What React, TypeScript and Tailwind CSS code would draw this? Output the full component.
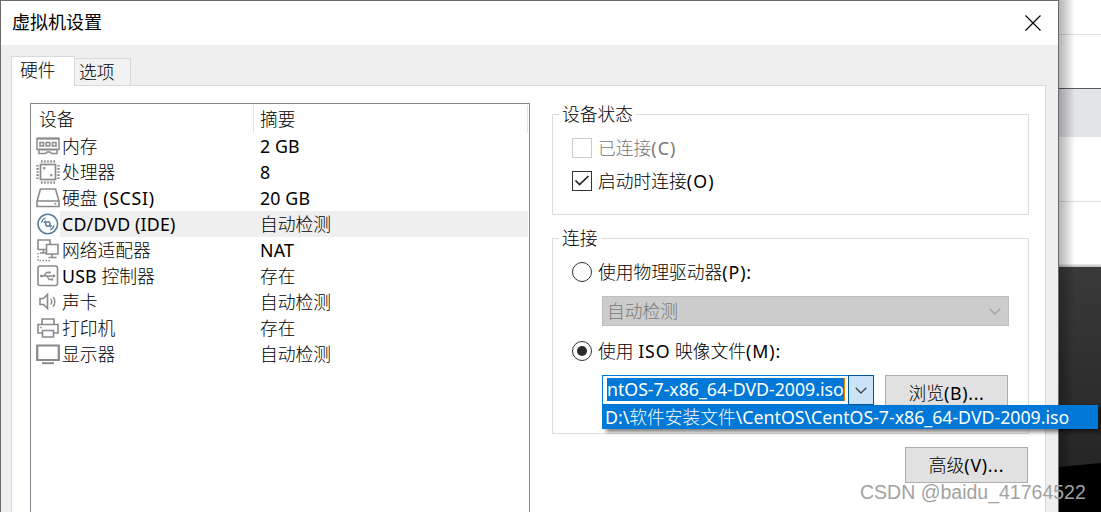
import React, { useState } from "react";
import clsx from "clsx";

type IconName =
  | "memory"
  | "cpu"
  | "disk"
  | "disc"
  | "network"
  | "usb"
  | "sound"
  | "printer"
  | "display";

const devices: { icon: IconName; name: string; summary: string; latin?: string }[] = [
  { icon: "memory", name: "内存", summary: "2 GB" },
  { icon: "cpu", name: "处理器", summary: "8" },
  { icon: "disk", name: "硬盘 (SCSI)", summary: "20 GB", latin: "ml-px tracking-[0.7px]" },
  { icon: "disc", name: "CD/DVD (IDE)", summary: "自动检测" },
  { icon: "network", name: "网络适配器", summary: "NAT" },
  { icon: "usb", name: "USB 控制器", summary: "存在" },
  { icon: "sound", name: "声卡", summary: "自动检测" },
  { icon: "printer", name: "打印机", summary: "存在" },
  { icon: "display", name: "显示器", summary: "自动检测" },
];

const iconShapes: Record<IconName, React.ReactNode> = {
  memory: (
    <>
      <path d="M1 4.500h22v11h-2v4h-5.500l-1.500-1.500h-3l-1.500 1.500H3v-4H1z" strokeWidth="1.5" />
      <path d="M4 8.500h3.500V12H4zM10.200 8.500h3.500V12h-3.500zM16.500 8.500H20V12h-3.500z" strokeWidth="1.6" />
      <path d="M1 4.500h22M3 15.500h18" strokeWidth="2" />
    </>
  ),
  cpu: (
    <>
      <rect x="4.500" y="4.500" width="15" height="15" strokeWidth="1.7" />
      <path d="M5 1.500h14M5 22.500h14" strokeWidth="2.4" strokeDasharray="1.6 1.5" />
      <path d="M1.500 5v14M22.500 5v14" strokeWidth="2.4" strokeDasharray="1.6 1.5" />
      <path d="M7.500 7.500H9V9H7.500zM14.500 14.500H16V16h-1.500z" strokeWidth="1" />
    </>
  ),
  disk: (
    <>
      <path d="M4.500 3h15L23 15v5.500H1V15zM1 15h22" strokeWidth="1.6" />
      <path d="M18.500 17.700h1.800" strokeWidth="1.6" />
    </>
  ),
  disc: (
    <g stroke="#5b7d9c">
      <circle cx="11.800" cy="12" r="9.800" strokeWidth="1.6" />
      <circle cx="11.800" cy="12" r="2.200" strokeWidth="1.5" />
      <path
        d="M5.500 10.500a6.500 6.500 0 0 1 4-4.500M8 11a4 4 0 0 1 1.800-2.400M18.100 13.500a6.500 6.500 0 0 1-4 4.500M15.600 13a4 4 0 0 1-1.800 2.400"
        strokeWidth="1.3"
      />
    </g>
  ),
  network: (
    <>
      <path d="M10.500 11.500H2V2h12v4" strokeWidth="1.6" />
      <path d="M10.500 6.500H22V16H10.500zM16 16v3M12.500 19.500h8" strokeWidth="1.6" />
      <path d="M7.500 11.500v3M4 15h6.500" strokeWidth="1.6" />
      <path d="M2 15v7.500h12" strokeWidth="1.4" strokeDasharray="1.5 1.5" />
    </>
  ),
  usb: (
    <>
      <rect x="2" y="2" width="19.500" height="19.500" rx="2" strokeWidth="1.6" />
      <path d="M5.500 12h12M8 12l2.500-3.500h2.500M11 12l2 3.500h2.500" strokeWidth="1.3" />
      <path
        d="M17 10l2.800 2-2.800 2zM4.200 10.800h2.400v2.400H4.200zM12.800 7.500h2v2h-2zM15 14.500h2v2h-2z"
        fill="#8a8a8a"
        stroke="none"
      />
    </>
  ),
  sound: (
    <>
      <path d="M4 8.500h3.500l4-4v14l-4-4H4z" strokeWidth="1.6" />
      <path d="M14.500 9a3.500 3.500 0 0 1 0 5.500M17 7a7 7 0 0 1 0 9.500" strokeWidth="1.4" />
    </>
  ),
  printer: (
    <>
      <path d="M6 8.500V3h12v5.500M6 17H2V8.500h20V17h-4" strokeWidth="1.6" />
      <path d="M6.500 14.500h11v6.500h-11z" strokeWidth="1.6" />
      <path d="M4.200 11.500h1.500" strokeWidth="1.3" />
    </>
  ),
  display: (
    <>
      <path d="M1.200 3.500h21.600v14.500H1.200z" strokeWidth="2.2" />
      <path d="M6 21.200h12" strokeWidth="2" />
    </>
  ),
};

const DeviceIcon = ({ name }: { name: IconName }) => (
  <svg className="size-6 shrink-0" viewBox="0 0 24 24" fill="none" stroke="#8a8a8a">
    {iconShapes[name]}
  </svg>
);

const Chevron = ({ className }: { className?: string }) => (
  <svg className={className} width="12" height="7" viewBox="0 0 12 7" fill="none" stroke="currentColor">
    <path d="M.7.700 6 6 11.300.700" strokeWidth="1.3" />
  </svg>
);

// Hanzi stay light, latin runs get the regular weight and their own spacing
const Label = ({ text, latin = "tracking-[0.2px]" }: { text: string; latin?: string }) => (
  <span className="whitespace-pre font-light">
    {text.split(/([!-~]+)/).map((part, i) =>
      i % 2 ? (
        <span key={i} className={clsx("font-normal", latin)}>
          {part}
        </span>
      ) : (
        part
      ),
    )}
  </span>
);

interface GroupProps {
  title: string;
  className?: string;
  children: React.ReactNode;
}

const Group: React.FC<GroupProps> = ({ title, className, children }) => (
  <fieldset className={clsx("min-w-0 border border-[#dcdcdc] px-[19px]", className)}>
    <legend className="-ml-[13px] h-6 px-[3px] leading-6">
      <Label text={title} />
    </legend>
    {children}
  </fieldset>
);

interface CheckProps {
  label: string;
  checked: boolean;
  disabled?: boolean;
  onChange?: () => void;
}

const Check: React.FC<CheckProps> = ({ label, checked, disabled, onChange }) => (
  <button
    type="button"
    role="checkbox"
    aria-checked={checked}
    disabled={disabled}
    onClick={onChange}
    className={clsx("flex h-5 items-center gap-[6px]", disabled && "text-[#787878]")}
  >
    <span
      className={clsx(
        "flex size-5 items-center justify-center border",
        disabled ? "border-[#cccccc]" : "border-[#333333]",
      )}
    >
      {checked && (
        <svg width="16" height="12" viewBox="0 0 16 12" fill="none" stroke="#222">
          <path d="m1.500 5.500 4 4L14.500 1" strokeWidth="1.7" />
        </svg>
      )}
    </span>
    <Label text={label} latin="tracking-[1.1px]" />
  </button>
);

interface RadioProps {
  label: string;
  checked: boolean;
  onChange: () => void;
}

const Radio: React.FC<RadioProps> = ({ label, checked, onChange }) => (
  <button
    type="button"
    role="radio"
    aria-checked={checked}
    onClick={onChange}
    className="flex h-5 items-center gap-[6px]"
  >
    <span className="flex size-5 items-center justify-center rounded-full border border-[#333333]">
      {checked && <span className="size-2.5 rounded-full bg-[#2b2b2b]" />}
    </span>
    <Label text={label} latin="tracking-[0.9px]" />
  </button>
);

const DeviceList = () => {
  const [selected, setSelected] = useState(3);

  return (
    <div className="w-[500px] shrink-0 border border-b-0 border-[#828790]">
      <div className="flex h-[29px] pt-px">
        <div className="w-[223px] border-r border-[#e5e5e5] pl-2 leading-[29px]">
          <Label text="设备" />
        </div>
        <div className="mr-px flex-1 border-r border-[#e5e5e5] pl-[6px] leading-[29px]">
          <Label text="摘要" />
        </div>
      </div>
      {devices.map((device, i) => (
        <div
          key={device.icon}
          onClick={() => setSelected(i)}
          className="flex h-[26px] items-center pl-[5px]"
        >
          <DeviceIcon name={device.icon} />
          <div
            className={clsx(
              "mr-px flex h-full flex-1 items-center leading-[26px]",
              i === selected && "bg-[#efefef]",
            )}
          >
            <span className="w-[200px] pl-[2px]">
              <Label text={device.name} latin={device.latin} />
            </span>
            <Label text={device.summary} />
          </div>
        </div>
      ))}
    </div>
  );
};

const ConnectionGroup = () => {
  const [source, setSource] = useState<"drive" | "iso">("iso");

  return (
    <Group title="连接" className="mt-[11px] h-[208px]">
      <div className="mt-3">
        <Radio
          label="使用物理驱动器(P):"
          checked={source === "drive"}
          onChange={() => setSource("drive")}
        />
      </div>
      <div className="ml-[30px] mt-[14px] flex h-[30px] w-[407px] items-center justify-between border border-[#bfbfbf] bg-[#cccccc] pl-1 pr-[7px] text-[#787878]">
        <Label text="自动检测" />
        <Chevron className="text-[#a0a0a0]" />
      </div>
      <div className="mt-[15px]">
        <Radio
          label="使用 ISO 映像文件(M):"
          checked={source === "iso"}
          onChange={() => setSource("iso")}
        />
      </div>
      <div className="mt-[14px] flex pl-[30px]">
        <div className="relative flex h-[30px] w-[272px] border border-[#0078d7]">
          <div className="my-[2px] ml-1 mr-[3px] flex h-[23px] flex-1 items-center whitespace-nowrap border-r border-[#f08000] bg-[#0078d7] leading-[23px] text-white">
            <Label text="ntOS-7-x86_64-DVD-2009.iso" latin="tracking-[-0.03px]" />
          </div>
          <div className="-my-px -mr-px flex w-[26px] items-center justify-center border border-[#005499] bg-[#cce4f7]">
            <Chevron className="text-[#444444]" />
          </div>
          <div className="absolute -left-px top-[29px] z-10 h-6 w-[496px] whitespace-nowrap bg-[#0078d7] pl-[3px] leading-6 text-white shadow-[4px_3px_4px_rgba(0,0,0,0.5)]">
            <Label text="D:\软件安装文件\CentOS\CentOS-7-x86_64-DVD-2009.iso" latin="tracking-[-0.02px]" />
          </div>
        </div>
        <button
          type="button"
          className="ml-[11px] h-9 w-[123px] border border-[#adadad] bg-[#e1e1e1]"
        >
          <Label text="浏览(B)..." latin="tracking-[0.7px]" />
        </button>
      </div>
    </Group>
  );
};

// The windows that show behind the dialog, along its right edge
const Backdrop = () => (
  <div className="relative flex w-[42px] flex-col bg-white">
    <div className="h-[35px] border-b border-[#dddddd]" />
    <div className="h-[54px] border-b border-[#5c5c5c]" />
    <div className="h-12 bg-[#e2e4e7]" />
    <div className="h-[65px] border-b border-[#dddddd]" />
    <div className="h-[62px]" />
    <div className="h-[3px] bg-gradient-to-b from-[#eeeeee] to-[#bbbbbb]" />
    <div className="flex flex-1 flex-col justify-end bg-gradient-to-b from-[#3a3a3a] to-[#262626] to-80%">
      <svg width="42" height="49" viewBox="0 0 42 49">
        <path d="M0 4 42 0v49H0z" fill="#000" />
      </svg>
    </div>
    <div className="absolute inset-y-0 left-0 w-4 bg-gradient-to-r from-black/30 to-transparent" />
  </div>
);

const App = () => (
  <div className="relative flex h-[512px] w-[1101px] overflow-hidden bg-white font-['Noto_Sans','Noto_Sans_CJK_SC',sans-serif] text-[17.75px] text-black">
    <div className="z-10 flex w-[1059px] shrink-0 flex-col border border-b-0 border-[#6b6b6b] bg-[#efefef]">
      <header className="flex h-11 shrink-0 items-center justify-between bg-white pl-[11px] pr-[17px]">
        <h1 className="-mt-px text-[18px]">虚拟机设置</h1>
        <svg width="16" height="16" viewBox="0 0 16 16" fill="none" stroke="#000">
          <path d="m.5.500 15 15M15.500.500l-15 15" strokeWidth="1.200" />
        </svg>
      </header>

      <div className="flex h-10 shrink-0 items-end pl-[10px]">
        <div className="z-10 h-[29px] w-[64px] border border-b-0 border-[#d9d9d9] bg-white pl-2 leading-[27px]">
          <Label text="硬件" />
        </div>
        <div className="h-[27px] w-[56px] border border-b-0 border-l-0 border-[#d9d9d9] bg-[#f2f2f2] pl-1 leading-[27px]">
          <Label text="选项" />
        </div>
      </div>

      <div className="z-10 -mt-px ml-[11px] h-px w-[62px] translate-y-px bg-white" />
      <main className="ml-[10px] mr-3 flex flex-1 border border-b-0 border-[#d9d9d9] bg-white pl-[18px] pr-4 pt-[17px]">
        <DeviceList />
        <div className="-mt-px ml-[22px] flex-1">
          <Group title="设备状态" className="h-[113px]">
            <div className="mt-3 flex flex-col gap-[13px]">
              <Check label="已连接(C)" checked={false} disabled />
              <Check label="启动时连接(O)" checked />
            </div>
          </Group>
          <ConnectionGroup />
          <div className="mt-[13px] flex justify-end">
            <button type="button" className="mr-px h-9 w-[123px] border border-[#adadad] bg-[#e1e1e1]">
              <Label text="高级(V)..." latin="tracking-[0.7px]" />
            </button>
          </div>
        </div>
      </main>
    </div>
    <Backdrop />
    <div className="absolute left-[860px] top-[480px] z-20 whitespace-nowrap font-['Liberation_Sans',sans-serif] text-[19.500px] leading-6 text-[#a2a2a2]">
      CSDN @baidu_41764522
    </div>
  </div>
);

export default App;
